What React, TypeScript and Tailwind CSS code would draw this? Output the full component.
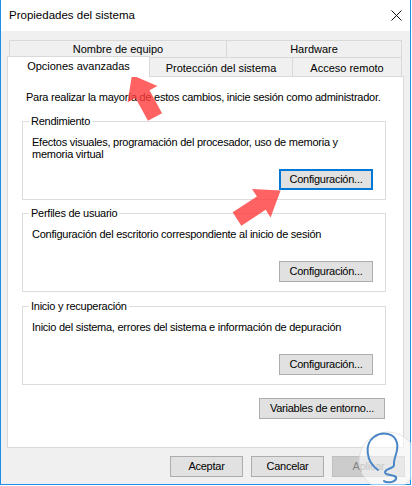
import React from 'react';

const font = "font-['Liberation_Sans',Arial,sans-serif]";

type BtnProps = {
  label: string;
  w: string;
  focused?: boolean;
  disabled?: boolean;
};

// Windows 10 style push button
const WinButton: React.FC<BtnProps> = ({ label, w, focused, disabled }) => {
  let look = 'border border-[#adadad] bg-[#e1e1e1] text-black';
  if (focused) look = 'border-2 border-[#0078d7] bg-[#e1e1e1] text-black';
  if (disabled) look = 'border border-[#bfbfbf] bg-[#cccccc] text-[#838383]';
  return (
    <div className={`flex h-[21px] shrink-0 items-center justify-center ${w} ${look}`}>
      {label}
    </div>
  );
};

type GroupProps = {
  title: string;
  text: string;
  className?: string;
  focused?: boolean;
};

const GroupBox: React.FC<GroupProps> = ({ title, text, className, focused }) => (
  <fieldset className={`w-[364px] border border-[#dcdcdc] px-[9px] pb-[9px] ${className ?? ''}`}>
    <legend className="ml-[-3px] px-[2px] leading-[14px]">{title}</legend>
    <div className="mt-[8px] h-[24px] leading-[12px]">{text}</div>
    <div className="mt-[9px] flex justify-end pr-[3px]">
      <WinButton label="Configuración..." w="w-[94px]" focused={focused} />
    </div>
  </fieldset>
);

export default function App() {
  return (
    <div className={`relative h-[486px] w-[412px] bg-white text-[11px] tracking-[-0.25px] text-black ${font}`}>
      <div className="flex h-[485px] w-[411px] flex-col border-x border-b border-[#1a8fe3]">
        {/* Title bar */}
        <div className="flex h-[31px] shrink-0 items-center justify-between bg-white pl-[8px] pr-[8px]">
          <span className="text-[11.5px] tracking-normal">Propiedades del sistema</span>
          <svg width="11" height="11" viewBox="0 0 11 11">
            <path d="M0.5 0.5L10.5 10.5M10.5 0.5L0.5 10.5" stroke="#111" strokeWidth="1" />
          </svg>
        </div>

        {/* Client area */}
        <div className="flex flex-1 flex-col bg-[#f0f0f0] pl-[6px] pt-[9px]">
          {/* back tab row */}
          <div className="ml-[2px] flex h-[17px] tracking-normal">
            <div className="flex w-[218px] items-center justify-center border-x border-t border-[#d9d9d9] pt-[1px]">
              Nombre de equipo
            </div>
            <div className="flex w-[175px] items-center justify-center border-r border-t border-[#d9d9d9] pt-[1px]">
              Hardware
            </div>
          </div>
          {/* front tab row */}
          <div className="flex h-[19px] tracking-normal">
            <div className="relative z-10 -mt-[1px] flex h-[21px] w-[143px] items-center justify-center border-x border-t border-[#d9d9d9] bg-white pb-[1px]">
              Opciones avanzadas
            </div>
            <div className="flex w-[143px] items-center justify-center border-r border-t border-[#d9d9d9] pt-[3px]">
              Protección del sistema
            </div>
            <div className="flex w-[109px] items-center justify-center border-r border-t border-[#d9d9d9] pt-[3px]">
              Acceso remoto
            </div>
          </div>

          {/* Tab page */}
          <div className="h-[372px] w-[397px] border border-[#d9d9d9] bg-white pl-[14px] pt-[14px]">
            <div className="ml-[4px] leading-[12px]">
              Para realizar la mayoría de estos cambios, inicie sesión como administrador.
            </div>
            <GroupBox
              className="mt-[11px]"
              title="Rendimiento"
              text="Efectos visuales, programación del procesador, uso de memoria y memoria virtual"
              focused
            />
            <GroupBox
              className="mt-[6px]"
              title="Perfiles de usuario"
              text="Configuración del escritorio correspondiente al inicio de sesión"
            />
            <GroupBox
              className="mt-[7px]"
              title="Inicio y recuperación"
              text="Inicio del sistema, errores del sistema e información de depuración"
            />
            <div className="mt-[13px] flex w-[364px] justify-end pr-[1px]">
              <WinButton label="Variables de entorno..." w="w-[126px]" />
            </div>
          </div>

          {/* Dialog buttons */}
          <div className="mt-[8px] flex w-[398px] justify-end gap-[8px]">
            <WinButton label="Aceptar" w="w-[73px]" />
            <WinButton label="Cancelar" w="w-[73px]" />
            <WinButton label="Aplicar" w="w-[73px]" disabled />
          </div>
        </div>
      </div>

      {/* annotation arrows + watermark */}
      <svg className="pointer-events-none absolute left-0 top-0" width="412" height="486">
        <g transform="translate(155 117) rotate(-118.7)">
          <polygon
            points="0,-8 26,-8 26,-17 48,0 26,17 26,8 0,8"
            fill="#ff3b3b"
            fillOpacity="0.8"
          />
        </g>
        <g transform="translate(237 219) rotate(-33.1)">
          <polygon
            points="0,-8 29,-8 29,-17 52,0 29,17 29,8 0,8"
            fill="#ff3b3b"
            fillOpacity="0.8"
          />
        </g>
        <circle cx="388" cy="461" r="29" fill="#ffffff" fillOpacity="0.55" stroke="#d4d4d4" strokeOpacity="0.6" />
        <path
          d="M378 470 C366 462, 364 444, 374 437 C382 431, 395 433, 397 443 C399 452, 393 458, 394 465 C394 469, 386 468, 385 472 C384 476, 398 474, 396 479 C394 483, 386 483, 384 481"
          fill="none"
          stroke="#4a86c6"
          strokeWidth="2"
          strokeLinecap="round"
        />
      </svg>
    </div>
  );
}
